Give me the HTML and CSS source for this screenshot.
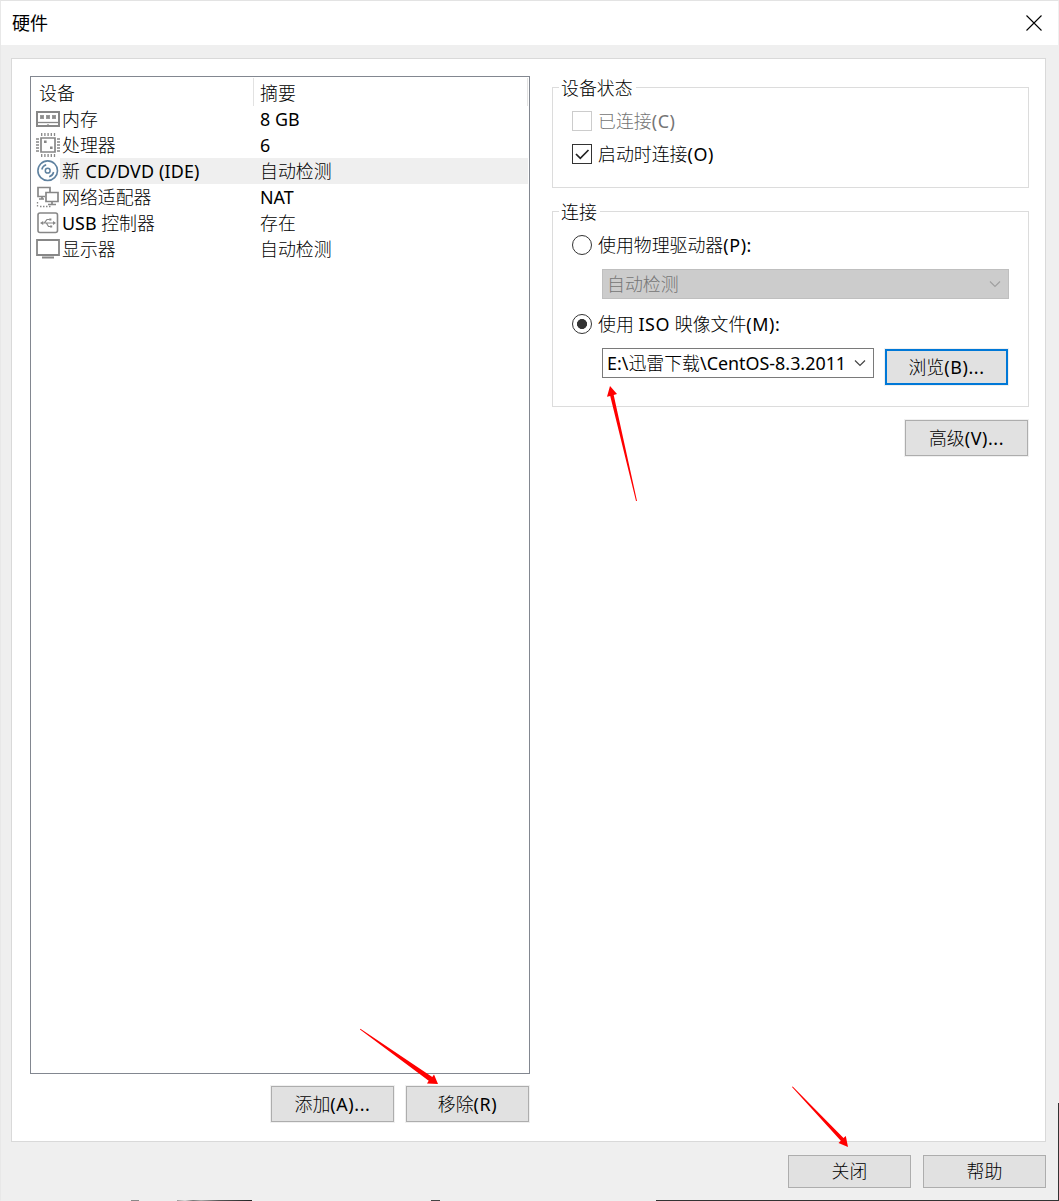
FILE: index.html
```html
<!DOCTYPE html>
<html lang="zh-CN">
<head>
<meta charset="utf-8">
<title>硬件</title>
<link rel="stylesheet" href="styles.css">
</head>
<body>
<div class="window">
  <header class="titlebar">
    <h1 class="title">硬件</h1>
    <svg class="close-icon" width="16" height="16" viewBox="0 0 16 16"><path d="M.5.5l15 15M15.5.5l-15 15" stroke="#000" stroke-width="1.1" fill="none"/></svg>
  </header>
  <main class="panel">
    <section class="devices">
      <div class="list">
        <div class="list-head"><span class="col-device">设备</span><span class="col-summary">摘要</span></div>
        <div class="row">
          <svg class="icon" width="24" height="26" viewBox="0 0 24 26" fill="none" stroke="#878787"><path d="M1 6h22v14H1z" stroke-width="2"/><path d="M4 9h4v4H4zM10 9h4v4h-4zM16 9h4v4h-4z" fill="#9a9a9a" stroke="none"/><path d="M5.500 10.500h1v1h-1zM11.500 10.500h1v1h-1zM17.500 10.500h1v1h-1z" fill="#666" stroke="none"/><path d="M2 16.500h20" stroke-width="1.300"/><path d="M9.500 20l2.500-2 2.500 2z" fill="#878787" stroke="none"/></svg>
          <span class="name">内存</span><span class="summary"><span class="en">8 GB</span></span>
        </div>
        <div class="row">
          <svg class="icon" width="24" height="26" viewBox="0 0 24 26" fill="none" stroke="#878787"><path d="M5 6h14v14H5z" stroke-width="1.700"/><path d="M5.700 1v3M8.900 1v3M12.100 1v3M15.300 1v3M18.500 1v3M5.700 22v3M8.900 22v3M12.100 22v3M15.300 22v3M18.500 22v3M0 7h3M0 10h3M0 13h3M0 16h3M0 19h3M21 7h3M21 10h3M21 13h3M21 16h3M21 19h3" stroke-width="1.300"/><path d="M8 8.500h2.600v2.600H8zM14 14.500h2.600v2.600H14z" fill="#878787" stroke="none"/></svg>
          <span class="name">处理器</span><span class="summary"><span class="en">6</span></span>
        </div>
        <div class="row selected">
          <svg class="icon" width="24" height="26" viewBox="0 0 24 26" fill="none" stroke="#5f82a0"><circle cx="11.700" cy="12.700" r="9.800" stroke-width="1.600"/><circle cx="11.700" cy="12.700" r="2.400" stroke-width="1.500"/><path d="M5.800 11.500a6.200 6.200 0 0 1 4.400-4.700M17.600 14a6.200 6.200 0 0 1-4.400 4.700" stroke-width="1.500"/></svg>
          <span class="name">新 <span class="en cd">CD/DVD (IDE)</span></span><span class="summary">自动检测</span>
        </div>
        <div class="row">
          <svg class="icon" width="24" height="26" viewBox="0 0 24 26" fill="none" stroke="#878787" stroke-width="1.700"><path d="M9 12.500H2V3.500h12v4.500M10 8.500h12v9H10zM16 17.500v3M12 20.500h8M6 13v2.500M3 15h5"/><path d="M1.500 18v5M4 22.500h12" stroke-width="1.300" stroke-dasharray="1.500 1.500"/></svg>
          <span class="name">网络适配器</span><span class="summary"><span class="en">NAT</span></span>
        </div>
        <div class="row">
          <svg class="icon" width="24" height="26" viewBox="0 0 24 26" fill="none" stroke="#878787"><rect x="2" y="3" width="19.500" height="19.500" rx="2" stroke-width="1.600"/><path d="M6 13h12M8.500 12.700L11 9.500h2.500M10.500 13.300L12.500 16.500h2" stroke-width="1.200"/><path d="M4 13l3.200-2v4zM17 11l3 2-3 2zM13.200 8.400h2.200v2.200h-2.200zM14 15.400h2.200v2.200H14z" fill="#878787" stroke="none"/></svg>
          <span class="name"><span class="en">USB</span> 控制器</span><span class="summary">存在</span>
        </div>
        <div class="row">
          <svg class="icon" width="24" height="26" viewBox="0 0 24 26" fill="none" stroke="#878787" stroke-width="1.800"><path d="M1 4h22v15H1zM6 21.500h12"/></svg>
          <span class="name">显示器</span><span class="summary">自动检测</span>
        </div>
      </div>
      <div class="actions">
        <button class="btn">添加<span class="en key">(A)...</span></button>
        <button class="btn">移除<span class="en key">(R)</span></button>
      </div>
    </section>
    <section class="settings">
      <div class="group status">
        <span class="legend">设备状态</span>
        <label class="option disabled"><span class="check"></span><span>已连接<span class="en key">(C)</span></span></label>
        <label class="option"><span class="check"><svg width="18" height="18" viewBox="0 0 18 18"><path d="M3 9l4.300 4.300L15.500 5" fill="none" stroke="#222" stroke-width="1.700"/></svg></span><span>启动时连接<span class="en key">(O)</span></span></label>
      </div>
      <div class="group connection">
        <span class="legend">连接</span>
        <label class="option"><span class="radio"></span><span>使用物理驱动器<span class="en key">(P):</span></span></label>
        <div class="combo off"><span>自动检测</span><svg width="12" height="8" viewBox="0 0 12 8"><path d="M1 1.500l5 5 5-5" fill="none" stroke="#a0a0a0" stroke-width="1.200"/></svg></div>
        <label class="option"><span class="radio on"></span><span>使用 <span class="en key">ISO</span> 映像文件<span class="en key">(M):</span></span></label>
        <div class="file">
          <div class="combo"><span class="path"><span class="en">E:\</span>迅雷下载<span class="en">\CentOS-8.3.2011</span></span><svg width="12" height="8" viewBox="0 0 12 8"><path d="M1 1.500l5 5 5-5" fill="none" stroke="#444" stroke-width="1.200"/></svg></div>
          <button class="btn focus">浏览<span class="en key">(B)...</span></button>
        </div>
      </div>
      <button class="btn advanced">高级<span class="en key">(V)...</span></button>
    </section>
  </main>
  <footer class="footer">
    <button class="btn short">关闭</button>
    <button class="btn short">帮助</button>
  </footer>
</div>
<svg class="arrows" width="1059" height="1201" viewBox="0 0 1059 1201" fill="#f00">
  <path d="M610 386l7 8-3.300.9L637 501h-1L610.200 396l-3.200.8z"/>
  <path d="M438 1084l-11-.5 1.700-2.800L360 1029.500l.4-.8L432.300 1077l1.700-2.600z"/>
  <path d="M848 1147l-9.500-4 2.300-2.200L792 1087l.7-.6L843.500 1138l2.300-2z"/>
</svg>
</body>
</html>
```

FILE: styles.css
```css
* { box-sizing: border-box; }
body {
  margin: 0;
  width: 1059px;
  height: 1201px;
  overflow: hidden;
  background: #efefef;
  color: #000;
  font: 300 17.9px/26px "Noto Sans", "Noto Sans CJK SC", sans-serif;
}
.en { font-weight: 400; }
.cd { margin-left: 1px; letter-spacing: .15px; }
.key { letter-spacing: .6px; }
.window {
  height: 1201px;
  display: flex;
  flex-direction: column;
  border: 1px solid;
  border-color: #e3e3e3 transparent transparent #e8e8e8;
  /* Slivers of the desktop visible along the window's edges */
  background:
    linear-gradient(#333, #333) 656px 100% / 403px 1px no-repeat border-box,
    linear-gradient(#333, #333) 100% 100% / 1px 98px no-repeat border-box,
    linear-gradient(90deg, #999, #ddd 8px, #777 16px, #aaa 24px, #555 42px, #222) 177px 100% / 75px 1px no-repeat border-box,
    linear-gradient(#444, #444) 431px 100% / 9px 1px no-repeat border-box,
    linear-gradient(#888, #888) 131px 100% / 8px 1px no-repeat border-box,
    #efefef;
}
.titlebar {
  height: 44px;
  flex: none;
  padding: 0 16px 0 11px;
  display: flex;
  align-items: center;
  justify-content: space-between;
  background: #fff;
}
.title { margin: 0; font-size: 18px; font-weight: 400; line-height: 42px; }
.close-icon { margin-bottom: 1px; }
.panel {
  height: 1084px;
  flex: none;
  margin: 13px 12px 0 10px;
  padding: 17px 16px 0 18px;
  display: flex;
  gap: 22px;
  border: 1px solid #d9d9d9;
  background: #fff;
}
.devices { width: 500px; flex: none; }
.list { height: 998px; padding-right: 1px; border: 1px solid #828790; }
.list-head {
  height: 29px;
  display: flex;
  padding-top: 1px;
  line-height: 30px;
}
.col-device { width: 223px; padding-left: 8px; border-right: 1px solid #e2e2e2; }
.col-summary { flex: 1; padding-left: 6px; border-right: 1px solid #e2e2e2; }
.row { height: 26px; display: flex; padding-left: 5px; line-height: 26px; white-space: nowrap; }
.icon { flex: none; }
.name { width: 200px; padding-left: 2px; }
.summary { flex: 1; }
.selected .name, .selected .summary { background: #efefef; }
.actions { display: flex; justify-content: flex-end; gap: 12px; margin: 12px 1px 0 0; }
.btn {
  width: 123px;
  height: 36px;
  flex: none;
  padding: 0;
  border: 1px solid #adadad;
  border-radius: 0;
  box-shadow: 0 0 0 1px #f0f0f0;
  background: #e1e1e1;
  color: #000;
  font: inherit;
}
.btn.short { height: 33px; padding-bottom: 1px; }
.btn.focus { border: 2px solid #0078d7; }
.settings { width: 477px; display: flex; flex-direction: column; align-items: flex-end; padding-top: 11px; }
.group { width: 477px; border: 1px solid #dcdcdc; position: relative; }
.status { height: 101px; padding: 20px 19px; }
.connection { height: 196px; margin-top: 23px; padding: 20px 19px; }
.legend { position: absolute; left: 6px; top: -13px; padding: 0 3px 0 2px; background: #fff; }
.option { height: 26px; display: flex; align-items: center; gap: 6px; }
.option + .option { margin-top: 7px; }
.disabled { color: #757575; }
.check, .radio { width: 20px; height: 20px; flex: none; border: 1px solid #333; }
.check svg { display: block; }
.disabled .check { border-color: #ccc; }
.radio { border-radius: 50%; }
.radio.on { background: radial-gradient(circle, #333 4.700px, transparent 5.300px); }
.combo {
  width: 272px;
  height: 30px;
  padding: 0 7px 0 4px;
  display: flex;
  align-items: center;
  justify-content: space-between;
  border: 1px solid #7a7a7a;
  white-space: nowrap;
}
.combo svg { flex: none; }
.combo.off {
  width: 407px;
  margin: 11px 0 12px 30px;
  background: #ccc;
  border-color: #bfbfbf;
  color: #757575;
}
.file { display: flex; gap: 11px; margin: 11px 0 0 30px; align-items: flex-start; }
.file .btn { margin-top: 1px; }
.path { letter-spacing: 0; }
.advanced { margin: 13px 1px 0 0; }
.footer { display: flex; justify-content: flex-end; gap: 12px; margin: 13px 12px 0 0; }
.arrows { position: absolute; left: 0; top: 0; pointer-events: none; }
```
